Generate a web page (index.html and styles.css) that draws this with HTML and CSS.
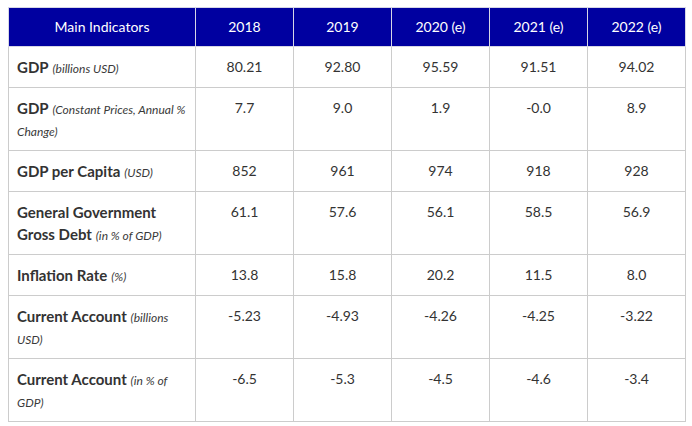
FILE: index.html
```html
<!DOCTYPE html>
<html>
<head>
<meta charset="utf-8">
<link rel="stylesheet" href="styles.css">
</head>
<body>
<table class="ind">
  <colgroup>
    <col class="c-label"><col class="c-val"><col class="c-val"><col class="c-val"><col class="c-val"><col class="c-val">
  </colgroup>
  <thead>
    <tr><th>Main Indicators</th><th>2018</th><th>2019</th><th>2020 (e)</th><th>2021 (e)</th><th>2022 (e)</th></tr>
  </thead>
  <tbody>
    <tr><td class="lbl"><b>GDP</b> <i>(billions USD)</i></td><td>80.21</td><td>92.80</td><td>95.59</td><td>91.51</td><td>94.02</td></tr>
    <tr><td class="lbl"><b>GDP</b> <i>(Constant Prices, Annual % Change)</i></td><td>7.7</td><td>9.0</td><td>1.9</td><td>-0.0</td><td>8.9</td></tr>
    <tr><td class="lbl"><b>GDP per Capita</b> <i>(USD)</i></td><td>852</td><td>961</td><td>974</td><td>918</td><td>928</td></tr>
    <tr><td class="lbl"><b>General Government Gross Debt</b> <i>(in % of GDP)</i></td><td>61.1</td><td>57.6</td><td>56.1</td><td>58.5</td><td>56.9</td></tr>
    <tr><td class="lbl"><b>Inflation Rate</b> <i>(%)</i></td><td>13.8</td><td>15.8</td><td>20.2</td><td>11.5</td><td>8.0</td></tr>
    <tr><td class="lbl"><b>Current Account</b> <i>(billions USD)</i></td><td>-5.23</td><td>-4.93</td><td>-4.26</td><td>-4.25</td><td>-3.22</td></tr>
    <tr><td class="lbl"><b>Current Account</b> <i>(in % of GDP)</i></td><td>-6.5</td><td>-5.3</td><td>-4.5</td><td>-4.6</td><td>-3.4</td></tr>
  </tbody>
</table>
</body>
</html>
```
FILE: styles.css
```css
html, body {
  margin: 0;
  background: #ffffff;
}
body {
  padding: 7px 6px 0 8px;
  font-family: Lato, "Open Sans", sans-serif;
  color: #333333;
}
.ind {
  border-collapse: collapse;
  width: 678px;
  table-layout: fixed;
  font-size: 14px;
}
.c-label { width: 187px; }
.c-val { width: 98px; }
.ind th, .ind td {
  border: 1px solid #cccccc;
  line-height: 22px;
  vertical-align: top;
  text-align: center;
}
.ind th {
  background: #0000a0;
  color: #ffffff;
  font-weight: normal;
  padding: 8px 6px;
  border-color: #d6d6e6;
}
.ind td {
  padding: 9px 6px;
}
.ind td.lbl {
  text-align: left;
  padding-left: 8px;
  padding-right: 8px;
  font-size: 15px;
}
.lbl b {
  font-weight: bold;
  color: #333333;
}
.lbl i {
  font-size: 12px;
  line-height: 1;
  color: #3a3a3a;
}
```
